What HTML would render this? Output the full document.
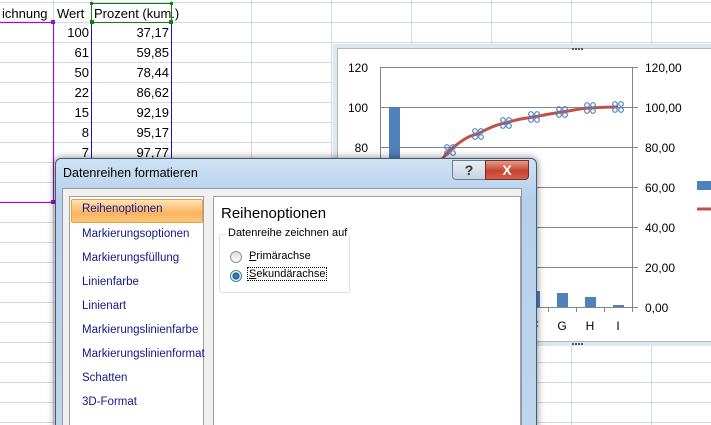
<!DOCTYPE html>
<html><head><style>
html,body{margin:0;width:711px;height:425px;overflow:hidden}
body{background:#fff;font-family:"Liberation Sans",sans-serif;position:relative}
.a{position:absolute}
.t{position:absolute;font-size:13px;color:#000;white-space:nowrap}
.it{position:absolute;left:82px;font-size:11.5px;color:#15168a;white-space:nowrap}
</style></head><body>
<svg class="a" style="left:0;top:0" width="711" height="425">
<g stroke="#d0d7e5" stroke-width="1">
<line x1="0" y1="2.5" x2="711" y2="2.5"/>
<line x1="0" y1="22.5" x2="711" y2="22.5"/><line x1="0" y1="42.5" x2="711" y2="42.5"/><line x1="0" y1="62.5" x2="711" y2="62.5"/><line x1="0" y1="82.5" x2="711" y2="82.5"/><line x1="0" y1="102.5" x2="711" y2="102.5"/><line x1="0" y1="122.5" x2="711" y2="122.5"/><line x1="0" y1="142.5" x2="711" y2="142.5"/><line x1="0" y1="162.5" x2="711" y2="162.5"/><line x1="0" y1="182.5" x2="711" y2="182.5"/><line x1="0" y1="202.5" x2="711" y2="202.5"/><line x1="0" y1="222.5" x2="711" y2="222.5"/><line x1="0" y1="242.5" x2="711" y2="242.5"/><line x1="0" y1="262.5" x2="711" y2="262.5"/><line x1="0" y1="282.5" x2="711" y2="282.5"/><line x1="0" y1="302.5" x2="711" y2="302.5"/><line x1="0" y1="322.5" x2="711" y2="322.5"/><line x1="0" y1="342.5" x2="711" y2="342.5"/><line x1="0" y1="362.5" x2="711" y2="362.5"/><line x1="0" y1="382.5" x2="711" y2="382.5"/><line x1="0" y1="402.5" x2="711" y2="402.5"/><line x1="0" y1="422.5" x2="711" y2="422.5"/>
<line x1="53.5" y1="0" x2="53.5" y2="425"/><line x1="91.5" y1="0" x2="91.5" y2="425"/><line x1="171.5" y1="0" x2="171.5" y2="425"/><line x1="251.5" y1="0" x2="251.5" y2="425"/><line x1="331.5" y1="0" x2="331.5" y2="425"/><line x1="411.5" y1="0" x2="411.5" y2="425"/><line x1="491.5" y1="0" x2="491.5" y2="425"/><line x1="571.5" y1="0" x2="571.5" y2="425"/><line x1="651.5" y1="0" x2="651.5" y2="425"/>
</g>
<g stroke="#8e16c6" stroke-width="1.2" fill="none"><path d="M0 22.5H53.5V202.5H0"/></g>
<rect x="51" y="20" width="4" height="4" fill="#8e16c6"/><rect x="51" y="200" width="4" height="4" fill="#8e16c6"/>
<g stroke="#1010d0"><line x1="91.5" y1="22" x2="91.5" y2="425"/><line x1="171.5" y1="22" x2="171.5" y2="425"/></g>
<rect x="91.5" y="3.5" width="80" height="19" fill="none" stroke="#108010"/>
<rect x="90" y="2" width="3" height="3" fill="#108010"/><rect x="170" y="2" width="3" height="3" fill="#108010"/><rect x="90" y="20" width="4" height="4" fill="#108010"/><rect x="169" y="20" width="4" height="4" fill="#108010"/>
<rect x="333" y="44" width="378" height="302" fill="#dce9ec"/>
<rect x="337.5" y="48.5" width="380" height="293" fill="#fff" stroke="#b0b8c0"/>
<g fill="#555"><rect x="572" y="48" width="2" height="2"/><rect x="575" y="48" width="2" height="2"/><rect x="578" y="48" width="2" height="2"/><rect x="581" y="48" width="2" height="2"/><rect x="572" y="343" width="2" height="2"/><rect x="575" y="343" width="2" height="2"/><rect x="578" y="343" width="2" height="2"/><rect x="581" y="343" width="2" height="2"/></g>
<g stroke="#868686"><line x1="380" y1="67.5" x2="638" y2="67.5"/><line x1="380" y1="107.5" x2="638" y2="107.5"/><line x1="380" y1="147.5" x2="638" y2="147.5"/><line x1="380" y1="187.5" x2="638" y2="187.5"/><line x1="380" y1="227.5" x2="638" y2="227.5"/><line x1="380" y1="267.5" x2="638" y2="267.5"/><line x1="380" y1="307.5" x2="638" y2="307.5"/><line x1="380.5" y1="67" x2="380.5" y2="308"/><line x1="632.5" y1="67" x2="632.5" y2="312"/>
<line x1="548.5" y1="307" x2="548.5" y2="312"/><line x1="576.5" y1="307" x2="576.5" y2="312"/><line x1="604.5" y1="307" x2="604.5" y2="312"/></g>
<g fill="#4f81bd"><rect x="389" y="107" width="11" height="200"/><rect x="417" y="185" width="11" height="122"/><rect x="445" y="207" width="11" height="100"/><rect x="473" y="263" width="11" height="44"/><rect x="501" y="277" width="11" height="30"/><rect x="529" y="291" width="11" height="16"/><rect x="557" y="293" width="11" height="14"/><rect x="585" y="297" width="11" height="10"/><rect x="613" y="305" width="11" height="2"/>
<rect x="697" y="181" width="14" height="9"/></g>
<path d="M394 233 C410 220,420 205,422 187 C435 170,440 160,450 150 C462 140,470 135,478 134 C490 127,498 124,506 123 C520 118,528 118,534 117 C548 114,555 113,562 112 C575 110,583 108,590 108 C605 107,612 107,618 107" fill="none" stroke="#c0504d" stroke-width="3"/>
<line x1="697" y1="209" x2="711" y2="209" stroke="#c0504d" stroke-width="3"/>
<g fill="none" stroke="#4f81bd" stroke-width="1.2">
<g transform="translate(450,150)"><circle cx="-3" cy="-3" r="2.3"/><circle cx="3" cy="-3" r="2.3"/><circle cx="-3" cy="3" r="2.3"/><circle cx="3" cy="3" r="2.3"/></g>
<g transform="translate(478,134)"><circle cx="-3" cy="-3" r="2.3"/><circle cx="3" cy="-3" r="2.3"/><circle cx="-3" cy="3" r="2.3"/><circle cx="3" cy="3" r="2.3"/></g>
<g transform="translate(506,123)"><circle cx="-3" cy="-3" r="2.3"/><circle cx="3" cy="-3" r="2.3"/><circle cx="-3" cy="3" r="2.3"/><circle cx="3" cy="3" r="2.3"/></g>
<g transform="translate(534,117)"><circle cx="-3" cy="-3" r="2.3"/><circle cx="3" cy="-3" r="2.3"/><circle cx="-3" cy="3" r="2.3"/><circle cx="3" cy="3" r="2.3"/></g>
<g transform="translate(562,112)"><circle cx="-3" cy="-3" r="2.3"/><circle cx="3" cy="-3" r="2.3"/><circle cx="-3" cy="3" r="2.3"/><circle cx="3" cy="3" r="2.3"/></g>
<g transform="translate(590,108)"><circle cx="-3" cy="-3" r="2.3"/><circle cx="3" cy="-3" r="2.3"/><circle cx="-3" cy="3" r="2.3"/><circle cx="3" cy="3" r="2.3"/></g>
<g transform="translate(618,107)"><circle cx="-3" cy="-3" r="2.3"/><circle cx="3" cy="-3" r="2.3"/><circle cx="-3" cy="3" r="2.3"/><circle cx="3" cy="3" r="2.3"/></g>
</g>
<g font-family="Liberation Sans" font-size="12" fill="#000">
<text x="368" y="72" text-anchor="end">120</text><text x="368" y="112" text-anchor="end">100</text><text x="368" y="152" text-anchor="end">80</text>
<text x="645" y="72">120,00</text><text x="645" y="112">100,00</text><text x="645" y="152">80,00</text><text x="645" y="192">60,00</text><text x="645" y="232">40,00</text><text x="645" y="272">20,00</text><text x="645" y="312">0,00</text>
<text x="562" y="330" text-anchor="middle">G</text><text x="590" y="330" text-anchor="middle">H</text><text x="618" y="330" text-anchor="middle">I</text><text x="535" y="330" text-anchor="middle">F</text>
</g>
</svg>
<div class="t" style="left:2px;top:6px">ichnung</div><div class="t" style="left:57px;top:6px">Wert</div><div class="t" style="left:94px;top:6px">Prozent (kum.)</div>
<div class="t" style="left:60px;top:25px;width:29px;text-align:right">100</div><div class="t" style="left:100px;top:25px;width:69px;text-align:right">37,17</div>
<div class="t" style="left:60px;top:45px;width:29px;text-align:right">61</div><div class="t" style="left:100px;top:45px;width:69px;text-align:right">59,85</div>
<div class="t" style="left:60px;top:65px;width:29px;text-align:right">50</div><div class="t" style="left:100px;top:65px;width:69px;text-align:right">78,44</div>
<div class="t" style="left:60px;top:85px;width:29px;text-align:right">22</div><div class="t" style="left:100px;top:85px;width:69px;text-align:right">86,62</div>
<div class="t" style="left:60px;top:105px;width:29px;text-align:right">15</div><div class="t" style="left:100px;top:105px;width:69px;text-align:right">92,19</div>
<div class="t" style="left:60px;top:125px;width:29px;text-align:right">8</div><div class="t" style="left:100px;top:125px;width:69px;text-align:right">95,17</div>
<div class="t" style="left:60px;top:145px;width:29px;text-align:right">7</div><div class="t" style="left:100px;top:145px;width:69px;text-align:right">97,77</div>
<div class="a" style="left:55px;top:158px;width:480px;height:270px;border-radius:6px 6px 0 0;background:linear-gradient(#cfe2f5,#b5d0ec 40px,#bcd6ee);border:1px solid #4a5a6c;box-shadow:0 0 8px rgba(0,0,0,.5)"></div>
<div class="t" style="left:63px;top:166px;font-size:12.5px">Datenreihen formatieren</div>
<div class="a" style="left:452px;top:160px;width:32px;height:18px;border:1px solid #6d7d90;border-radius:0 0 0 4px;background:linear-gradient(#e8eef5,#c6d3e2);font-size:14px;text-align:center;line-height:18px;color:#333;font-weight:bold">?</div>
<div class="a" style="left:485px;top:160px;width:42px;height:18px;border:1px solid #6d3030;border-radius:0 0 4px 0;background:linear-gradient(#e59b8a,#c8432f 55%,#d6604a);font-size:14px;text-align:center;line-height:18px;color:#fff;font-weight:bold">X</div>
<div class="a" style="left:62px;top:188px;width:458px;height:240px;background:#f0f0f0;border:1px solid #8f9aa6"></div>
<div class="a" style="left:69px;top:196px;width:133px;height:235px;background:#fff;border:1px solid #a0a0a0"></div>
<div class="a" style="left:213px;top:196px;width:306px;height:235px;background:#fff;border:1px solid #a0a0a0"></div>
<div class="a" style="left:71px;top:199px;width:130px;height:22px;border:1px solid #e5a13c;border-radius:2px;background:linear-gradient(#fde4b8,#fbb35f 60%,#fcc87c)"></div>
<div class="it" style="top:203px">Reihenoptionen</div>
<div class="it" style="top:228px">Markierungsoptionen</div>
<div class="it" style="top:252px">Markierungsfüllung</div>
<div class="it" style="top:276px">Linienfarbe</div>
<div class="it" style="top:300px">Linienart</div>
<div class="it" style="top:324px">Markierungslinienfarbe</div>
<div class="it" style="top:348px">Markierungslinienformat</div>
<div class="it" style="top:372px">Schatten</div>
<div class="it" style="top:396px">3D-Format</div>
<div class="t" style="left:221px;top:205px;font-size:15px">Reihenoptionen</div>
<div class="a" style="left:219px;top:234px;width:129px;height:57px;border:1px solid #d5dfe5;border-radius:3px"></div>
<div class="t" style="left:226px;top:227px;font-size:11px;background:#fff;padding:0 2px">Datenreihe zeichnen auf</div>
<div class="a" style="left:230px;top:251px;width:10px;height:10px;border-radius:50%;border:1px solid #8e8f8f;background:linear-gradient(#e0e0e0,#fafafa)"></div>
<div class="a" style="left:230px;top:270px;width:10px;height:10px;border-radius:50%;border:1px solid #3c7fb1;background:radial-gradient(#2a7fc0 30%,#0b3e6c 45%,#fff 55%)"></div>
<div class="t" style="left:249px;top:250px;font-size:11px"><u>P</u>rimärachse</div>
<div class="t" style="left:248px;top:268px;font-size:11px;outline:1px dotted #000;padding:0 1px"><u>S</u>ekundärachse</div>
</body></html>
